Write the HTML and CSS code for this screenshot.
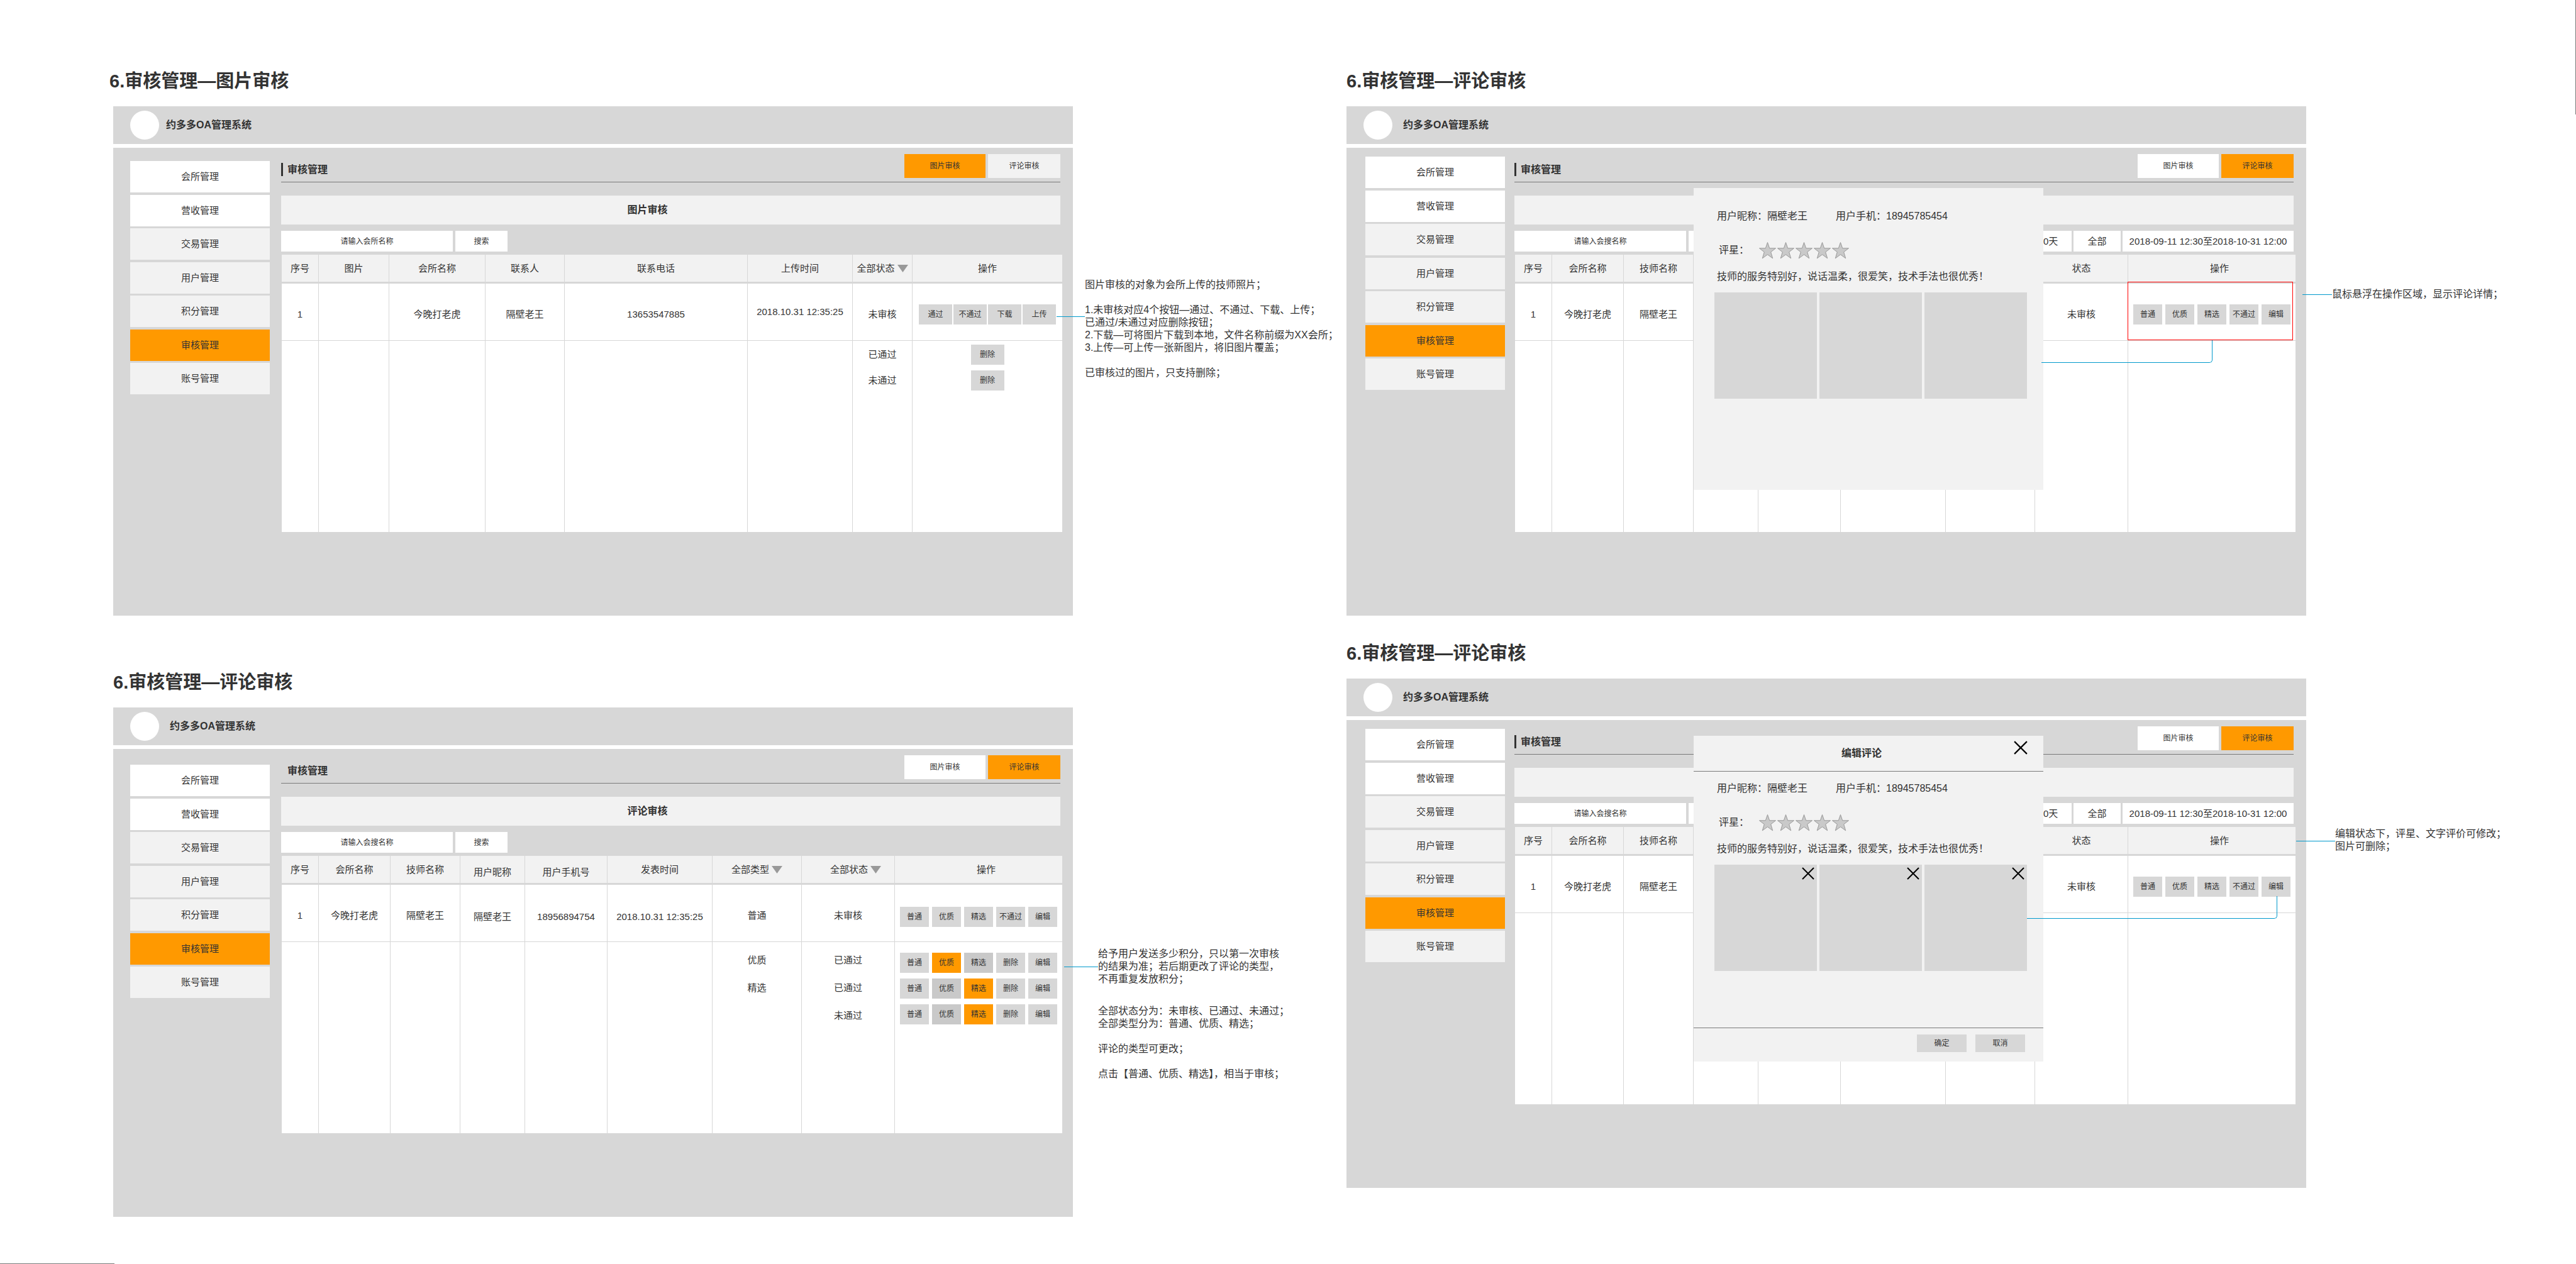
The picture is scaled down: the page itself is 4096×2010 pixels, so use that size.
FILE: index.html
```html
<!DOCTYPE html>
<html lang="zh-CN">
<head>
<meta charset="utf-8">
<title>约多多OA管理系统</title>
<link rel="stylesheet" href="styles.css">
</head>
<body>
<svg class="defs" aria-hidden="true">
  <symbol id="star" viewBox="0 0 28 28"><path d="M14 1.5 17.2 10.8H27L19.2 16.8 22.2 26.8 14 20.8 5.8 26.8 8.8 16.8 1 10.8h9.8z"/></symbol>
  <symbol id="cross" viewBox="0 0 20 20"><path d="M1 1 19 19M19 1 1 19"/></symbol>
  <symbol id="caret" viewBox="0 0 17 12"><path d="M0 0h17L8.5 12z"/></symbol>
</svg>

<main class="page">
  <div class="column">

    <section class="board board--photo">
      <h2 class="board-title">6.审核管理—图片审核</h2>
      <div class="screen">
        <header class="topbar"><span class="logo"></span><strong>约多多OA管理系统</strong></header>
        <div class="body">
          <nav class="menu">
            <a class="plain" href="#">会所管理</a><a class="plain" href="#">营收管理</a><a href="#">交易管理</a><a href="#">用户管理</a><a href="#">积分管理</a><a class="on" href="#">审核管理</a><a href="#">账号管理</a>
          </nav>
          <div class="content">
            <div class="head">
              <h3>审核管理</h3>
              <div class="tabs"><button class="on">图片审核</button><button class="dim">评论审核</button></div>
            </div>
            <div class="banner">图片审核</div>
            <form class="tools">
              <input type="text" placeholder="请输入会所名称" aria-label="请输入会所名称">
              <button type="button">搜索</button>
            </form>
            <table class="photos">
              <colgroup><col><col><col><col><col><col><col><col></colgroup>
              <thead>
                <tr>
                  <th>序号</th><th>图片</th><th>会所名称</th><th>联系人</th><th>联系电话</th><th>上传时间</th>
                  <th><label class="filter"><select aria-label="状态"><option>全部状态</option></select><svg><use href="#caret"/></svg></label></th>
                  <th>操作</th>
                </tr>
              </thead>
              <tbody>
                <tr class="first">
                  <td>1</td><td></td><td>今晚打老虎</td><td>隔壁老王</td><td>13653547885</td><td class="high">2018.10.31 12:35:25</td><td>未审核</td>
                  <td><div class="actions"><button>通过</button><button>不通过</button><button>下载</button><button>上传</button></div></td>
                </tr>
                <tr class="rest">
                  <td></td><td></td><td></td><td></td><td></td><td></td>
                  <td><div class="stack"><span>已通过</span><span>未通过</span></div></td>
                  <td><div class="stack"><div class="actions"><button>删除</button></div><div class="actions"><button>删除</button></div></div></td>
                </tr>
              </tbody>
            </table>
          </div>
        </div>
      </div>
      <aside class="note">
        <p>图片审核的对象为会所上传的技师照片；</p>
        <p>1.未审核对应4个按钮—通过、不通过、下载、上传；<br>已通过/未通过对应删除按钮；<br>2.下载—可将图片下载到本地，文件名称前缀为XX会所；<br>3.上传—可上传一张新图片，将旧图片覆盖；</p>
        <p>已审核过的图片，只支持删除；</p>
      </aside>
    </section>

    <section class="board board--review">
      <h2 class="board-title">6.审核管理—评论审核</h2>
      <div class="screen">
        <header class="topbar"><span class="logo"></span><strong>约多多OA管理系统</strong></header>
        <div class="body">
          <nav class="menu">
            <a class="plain" href="#">会所管理</a><a class="plain" href="#">营收管理</a><a href="#">交易管理</a><a href="#">用户管理</a><a href="#">积分管理</a><a class="on" href="#">审核管理</a><a href="#">账号管理</a>
          </nav>
          <div class="content">
            <div class="head">
              <h3>审核管理</h3>
              <div class="tabs"><button>图片审核</button><button class="on">评论审核</button></div>
            </div>
            <div class="banner">评论审核</div>
            <form class="tools">
              <input type="text" placeholder="请输入会搜名称" aria-label="请输入会搜名称">
              <button type="button">搜索</button>
            </form>
            <table class="reviews">
              <colgroup><col><col><col><col><col><col><col><col><col></colgroup>
              <thead>
                <tr>
                  <th>序号</th><th>会所名称</th><th>技师名称</th><th class="low">用户昵称</th><th class="low">用户手机号</th><th>发表时间</th>
                  <th><label class="filter"><select aria-label="类型"><option>全部类型</option></select><svg><use href="#caret"/></svg></label></th>
                  <th class="shift"><label class="filter"><select aria-label="状态"><option>全部状态</option></select><svg><use href="#caret"/></svg></label></th>
                  <th class="shift">操作</th>
                </tr>
              </thead>
              <tbody>
                <tr class="first">
                  <td>1</td><td>今晚打老虎</td><td>隔壁老王</td><td class="low">隔壁老王</td><td class="low">18956894754</td><td class="low">2018.10.31 12:35:25</td><td>普通</td><td>未审核</td>
                  <td class="low"><div class="actions"><button>普通</button><button>优质</button><button>精选</button><button>不通过</button><button>编辑</button></div></td>
                </tr>
                <tr class="rest">
                  <td></td><td></td><td></td><td></td><td></td><td></td>
                  <td><div class="stack stack--text"><span>优质</span><span>精选</span></div></td>
                  <td><div class="stack stack--text"><span>已通过</span><span>已通过</span><span>未通过</span></div></td>
                  <td>
                    <div class="stack">
                      <div class="actions"><button>普通</button><button class="on">优质</button><button class="dark">精选</button><button>删除</button><button>编辑</button></div>
                      <div class="actions"><button>普通</button><button class="dark">优质</button><button class="on">精选</button><button>删除</button><button>编辑</button></div>
                      <div class="actions"><button>普通</button><button class="dark">优质</button><button class="on">精选</button><button>删除</button><button>编辑</button></div>
                    </div>
                  </td>
                </tr>
              </tbody>
            </table>
          </div>
        </div>
      </div>
      <aside class="note">
        <p class="wide">给予用户发送多少积分，只以第一次审核<br>的结果为准；若后期更改了评论的类型，<br>不再重复发放积分；</p>
        <p>全部状态分为：未审核、已通过、未通过；<br>全部类型分为：普通、优质、精选；</p>
        <p>评论的类型可更改；</p>
        <p>点击【普通、优质、精选】，相当于审核；</p>
      </aside>
    </section>
  </div>

  <div class="column">

    <section class="board board--hover">
      <h2 class="board-title">6.审核管理—评论审核</h2>
      <div class="screen">
        <header class="topbar"><span class="logo"></span><strong>约多多OA管理系统</strong></header>
        <div class="body">
          <nav class="menu">
            <a class="plain" href="#">会所管理</a><a class="plain" href="#">营收管理</a><a href="#">交易管理</a><a href="#">用户管理</a><a href="#">积分管理</a><a class="on" href="#">审核管理</a><a href="#">账号管理</a>
          </nav>
          <div class="content">
            <div class="head">
              <h3>审核管理</h3>
              <div class="tabs"><button>图片审核</button><button class="on">评论审核</button></div>
            </div>
            <div class="banner"></div>
            <form class="tools">
              <input type="text" placeholder="请输入会搜名称" aria-label="请输入会搜名称">
              <button type="button"></button>
              <div class="range"><button type="button">30天</button><button type="button">全部</button><button type="button" class="dates">2018-09-11 12:30至2018-10-31 12:00</button></div>
            </form>
            <table class="reviews">
              <colgroup><col><col><col><col><col><col><col><col><col></colgroup>
              <thead>
                <tr><th>序号</th><th>会所名称</th><th>技师名称</th><th></th><th></th><th></th><th></th><th>状态</th><th class="shift">操作</th></tr>
              </thead>
              <tbody>
                <tr class="first">
                  <td>1</td><td>今晚打老虎</td><td>隔壁老王</td><td></td><td></td><td></td><td></td><td>未审核</td>
                  <td class="marked"><div class="actions"><button>普通</button><button>优质</button><button>精选</button><button>不通过</button><button>编辑</button></div></td>
                </tr>
                <tr class="rest"><td></td><td></td><td></td><td></td><td></td><td></td><td></td><td></td><td></td></tr>
              </tbody>
            </table>
          </div>
          <div class="popup">
            <div class="details">
              <p class="who"><span>用户昵称：隔壁老王</span><span>用户手机：18945785454</span></p>
              <div class="rating"><span>评星：</span><div class="stars"><svg><use href="#star"/></svg><svg><use href="#star"/></svg><svg><use href="#star"/></svg><svg><use href="#star"/></svg><svg><use href="#star"/></svg></div></div>
              <p class="comment">技师的服务特别好，说话温柔，很爱笑，技术手法也很优秀！</p>
              <div class="shots"><div></div><div></div><div></div></div>
            </div>
          </div>
          <span class="link"></span>
        </div>
      </div>
      <aside class="note"><p>鼠标悬浮在操作区域，显示评论详情；</p></aside>
    </section>

    <section class="board board--edit">
      <h2 class="board-title">6.审核管理—评论审核</h2>
      <div class="screen">
        <header class="topbar"><span class="logo"></span><strong>约多多OA管理系统</strong></header>
        <div class="body">
          <nav class="menu">
            <a class="plain" href="#">会所管理</a><a class="plain" href="#">营收管理</a><a href="#">交易管理</a><a href="#">用户管理</a><a href="#">积分管理</a><a class="on" href="#">审核管理</a><a href="#">账号管理</a>
          </nav>
          <div class="content">
            <div class="head">
              <h3>审核管理</h3>
              <div class="tabs"><button>图片审核</button><button class="on">评论审核</button></div>
            </div>
            <div class="banner"></div>
            <form class="tools">
              <input type="text" placeholder="请输入会搜名称" aria-label="请输入会搜名称">
              <button type="button"></button>
              <div class="range"><button type="button">30天</button><button type="button">全部</button><button type="button" class="dates">2018-09-11 12:30至2018-10-31 12:00</button></div>
            </form>
            <table class="reviews">
              <colgroup><col><col><col><col><col><col><col><col><col></colgroup>
              <thead>
                <tr><th>序号</th><th>会所名称</th><th>技师名称</th><th></th><th></th><th></th><th></th><th>状态</th><th class="shift">操作</th></tr>
              </thead>
              <tbody>
                <tr class="first">
                  <td>1</td><td>今晚打老虎</td><td>隔壁老王</td><td></td><td></td><td></td><td></td><td>未审核</td>
                  <td><div class="actions"><button>普通</button><button>优质</button><button>精选</button><button>不通过</button><button>编辑</button></div></td>
                </tr>
                <tr class="rest"><td></td><td></td><td></td><td></td><td></td><td></td><td></td><td></td><td></td></tr>
              </tbody>
            </table>
          </div>
          <div class="popup">
            <div class="popup-head"><h4>编辑评论</h4><button class="close" aria-label="关闭"><svg><use href="#cross"/></svg></button></div>
            <div class="details">
              <p class="who"><span>用户昵称：隔壁老王</span><span>用户手机：18945785454</span></p>
              <div class="rating"><span>评星：</span><div class="stars"><svg><use href="#star"/></svg><svg><use href="#star"/></svg><svg><use href="#star"/></svg><svg><use href="#star"/></svg><svg><use href="#star"/></svg></div></div>
              <p class="comment">技师的服务特别好，说话温柔，很爱笑，技术手法也很优秀！</p>
              <div class="shots">
                <div><button aria-label="删除图片"><svg><use href="#cross"/></svg></button></div>
                <div><button aria-label="删除图片"><svg><use href="#cross"/></svg></button></div>
                <div><button aria-label="删除图片"><svg><use href="#cross"/></svg></button></div>
              </div>
            </div>
            <div class="popup-foot"><button>确定</button><button>取消</button></div>
          </div>
          <span class="link"></span>
        </div>
      </div>
      <aside class="note"><p>编辑状态下，评星、文字评价可修改；<br>图片可删除；</p></aside>
    </section>
  </div>
</main>
</body>
</html>
```

FILE: styles.css
```css
:root {
  --gray: #d7d7d7;
  --light: #f2f2f2;
  --orange: #ff9900;
  --line: #797979;
  --blue: #0099cc;
}

* { box-sizing: border-box; }

body {
  margin: 0;
  background: #fff;
  color: #333;
  font: 15px/20px "Liberation Sans", "Noto Sans CJK SC", sans-serif;
}

h2, h3, h4, p { margin: 0; }

button, input, select {
  border: 0;
  border-radius: 0;
  padding: 0;
  margin: 0;
  background: none;
  color: inherit;
  font: inherit;
}

.defs { display: none; }

/* Page: two columns of boards */
.page {
  position: relative;
  min-height: 100vh;
  padding: 109px 0 75px 180px;
  display: grid;
  grid-template-columns: minmax(0, 1961fr) minmax(0, 1955fr);
}

.page::before,
.page::after {
  content: "";
  position: absolute;
  background: var(--line);
}
.page::before { top: 0; right: 0; width: 1px; height: 182px; }
.page::after { bottom: 0; left: 0; width: 182px; height: 1px; }

.column {
  display: flex;
  flex-direction: column;
  gap: 86px;
}
.column + .column { gap: 40px; }

.board {
  --menu-left: 27px;
  --menu-top: 21px;
  --brand-gap: 17px;
  --action: 46px;
  --action-gap: 5px;
  display: grid;
  grid-template-columns: minmax(0, 1526fr) minmax(0, 435fr);
}
.column + .column .board { grid-template-columns: minmax(0, 1526fr) minmax(0, 429fr); }

.board--photo { --brand-gap: 11px; --action: 53px; --action-gap: 2px; }
.board--review { --menu-top: 25px; }
.board--hover, .board--edit { --menu-left: 30px; --menu-top: 14px; }

.board-title {
  grid-column: 1 / -1;
  margin-bottom: 20px;
  font-size: 29px;
  line-height: 40px;
}
.board--photo .board-title { margin-left: -6px; }

/* Screen frame */
.topbar {
  display: flex;
  align-items: center;
  gap: var(--brand-gap);
  height: 60px;
  padding-left: 27px;
  margin-bottom: 6px;
  background: var(--gray);
  font-size: 16px;
}
.logo { width: 46px; height: 46px; border-radius: 50%; background: #fff; }

.body {
  position: relative;
  display: grid;
  grid-template-columns: 267px minmax(0, 1fr);
  padding-right: 20px;
  min-height: 744px;
  background: var(--gray);
}

.menu {
  display: flex;
  flex-direction: column;
  justify-content: space-between;
  width: 222px;
  height: 371px;
  margin: var(--menu-top) 0 0 var(--menu-left);
}
.menu a {
  background: var(--light);
  color: inherit;
  line-height: 50px;
  text-align: center;
  text-decoration: none;
}
.menu .plain { background: #fff; }
.menu .on { background: var(--orange); }

/* Content area */
.head {
  display: flex;
  justify-content: space-between;
  align-items: flex-start;
  height: 55px;
  padding-top: 10px;
  border-bottom: 1px solid var(--line);
}
.head h3 {
  margin-top: 14px;
  padding-left: 7px;
  border-left: 3px solid #333;
  font-size: 16px;
  line-height: 21px;
}
.board--review .head h3 { border-color: transparent; }

.tabs { display: flex; gap: 4px; font-size: 12px; }
.tabs button { width: 115px; height: 38px; background: #fff; }
.tabs button:first-child { width: 129px; }
.tabs .dim { background: var(--light); }
.tabs .on { background: var(--orange); }

.banner {
  height: 46px;
  margin: 21px 0 10px;
  padding-right: 74px;
  background: var(--light);
  font-size: 16px;
  font-weight: bold;
  line-height: 46px;
  text-align: center;
}

.tools {
  display: flex;
  gap: 4px;
  height: 33px;
  margin-bottom: 5px;
  font-size: 12px;
}
.tools input { width: 273px; background: #fff; text-align: center; }
.tools input::placeholder { color: #333; opacity: 1; }
.tools button { width: 83px; background: #fff; }
.range { display: flex; gap: 3px; margin-left: auto; font-size: 15px; }
.range button { width: 75px; }
.range .dates { width: 272px; }

/* Tables */
table {
  width: calc(100% + 2px);
  margin-left: 1px;
  border-spacing: 0;
  table-layout: fixed;
  background: #fff;
  text-align: center;
}
th, td { padding: 0; }
th + th, td + td { border-left: 1px solid var(--gray); }
th {
  height: 46px;
  border-bottom: 3px solid var(--gray);
  background: var(--light);
  font-weight: normal;
}
.first td { height: 91px; padding-top: 8px; border-bottom: 1px solid var(--gray); }
.first .high { padding-top: 0; }
.first .low { padding-top: 12px; }
.rest td { height: 304px; vertical-align: top; }
th.low { padding-top: 8px; }
th.shift { padding-left: 24px; }

.photos col:nth-child(1) { width: 58px; }
.photos col:nth-child(2) { width: 112px; }
.photos col:nth-child(3) { width: 153px; }
.photos col:nth-child(4) { width: 126px; }
.photos col:nth-child(6) { width: 167px; }
.photos col:nth-child(7) { width: 95px; }
.photos col:nth-child(8) { width: 239px; }

.reviews col:nth-child(1) { width: 58px; }
.reviews col:nth-child(2) { width: 114px; }
.reviews col:nth-child(3) { width: 111px; }
.reviews col:nth-child(4) { width: 103px; }
.reviews col:nth-child(5) { width: 131px; }
.reviews col:nth-child(7) { width: 142px; }
.reviews col:nth-child(8) { width: 148px; }
.reviews col:nth-child(9) { width: 267px; }

.filter { display: flex; justify-content: center; align-items: center; gap: 4px; }
.filter select { appearance: none; width: 60px; height: 20px; }
.filter svg { width: 17px; height: 12px; fill: #999; }

.actions { display: flex; justify-content: center; gap: var(--action-gap); }
.actions button {
  width: var(--action);
  height: 32px;
  background: var(--gray);
  font-size: 12px;
}
.actions .on { background: var(--orange); }
.actions .dark { background: #c9c9c9; }

.stack { display: flex; flex-direction: column; gap: 9px; padding-top: 6px; line-height: 32px; }
.board--review .stack { padding-top: 17px; }
.board--review .stack--text { gap: 12px; padding-top: 13px; }

.marked { position: relative; }
.marked::after {
  content: "";
  position: absolute;
  inset: -3px 4px 0 -1px;
  border: 1px solid #f00;
}

/* Review popup */
.popup {
  position: absolute;
  left: 552px;
  top: 64px;
  width: 556px;
  height: 480px;
  padding-top: 33px;
  background: var(--light);
  font-size: 16px;
}
.board--edit .popup {
  top: 25px;
  height: 518px;
  padding-top: 0;
  display: flex;
  flex-direction: column;
}
.popup-head {
  display: flex;
  align-items: center;
  height: 57px;
  margin-bottom: 15px;
  padding: 0 25px;
  border-bottom: 1px solid var(--line);
}
.popup-head h4 { flex: 1; font-size: 16px; text-align: center; }
.close { width: 22px; height: 22px; margin-top: -18px; }
.close svg, .shots svg { display: block; width: 100%; height: 100%; fill: none; stroke: #000; stroke-width: 2; }

.details { padding: 0 26px 0 33px; line-height: 24px; }
.who { display: flex; gap: 45px; padding-left: 4px; }
.rating { display: flex; align-items: center; gap: 15px; height: 28px; margin: 28px 0 16px; padding-left: 7px; }
.stars { display: flex; }
.stars svg { width: 29px; height: 28px; fill: #c9c9c9; stroke: #999; stroke-width: 1; }
.comment { padding-left: 4px; }
.shots { display: grid; grid-template-columns: repeat(3, 1fr); gap: 4px; height: 169px; margin-top: 13px; }
.shots div { display: flex; justify-content: flex-end; padding: 4px; background: var(--gray); }
.shots button { width: 20px; height: 20px; }

.popup-foot {
  display: flex;
  justify-content: flex-end;
  gap: 14px;
  height: 54px;
  margin-top: auto;
  padding: 10px 29px 0 0;
  border-top: 1px solid var(--line);
  font-size: 12px;
}
.popup-foot button { width: 79px; height: 28px; background: var(--gray); }

/* Connector from the action cell to the popup */
.link {
  position: absolute;
  left: 1105px;
  right: 149px;
  top: 306px;
  height: 36px;
  border: solid var(--blue);
  border-width: 0 1px 1px 0;
  border-bottom-right-radius: 5px;
}
.board--edit .link { left: 1082px; right: 46px; top: 280px; }

/* Notes beside the screens */
.note {
  position: relative;
  align-self: start;
  margin: 274px 0 0 19px;
  font-size: 16px;
  white-space: nowrap;
}
.note p + p { margin-top: 20px; }
.note p.wide + p { margin-top: 31px; }
.note::before {
  content: "";
  position: absolute;
  right: 100%;
  top: 60px;
  width: 45px;
  height: 1px;
  background: var(--blue);
}
.board--review .note { margin: 382px 0 0 40px; }
.board--review .note::before { top: 30px; width: 54px; }
.board--hover .note { margin: 289px 0 0 41px; }
.board--hover .note::before { top: 10px; width: 47px; }
.board--edit .note { margin: 237px 0 0 46px; }
.board--edit .note::before { top: 21px; width: 62px; }
```
